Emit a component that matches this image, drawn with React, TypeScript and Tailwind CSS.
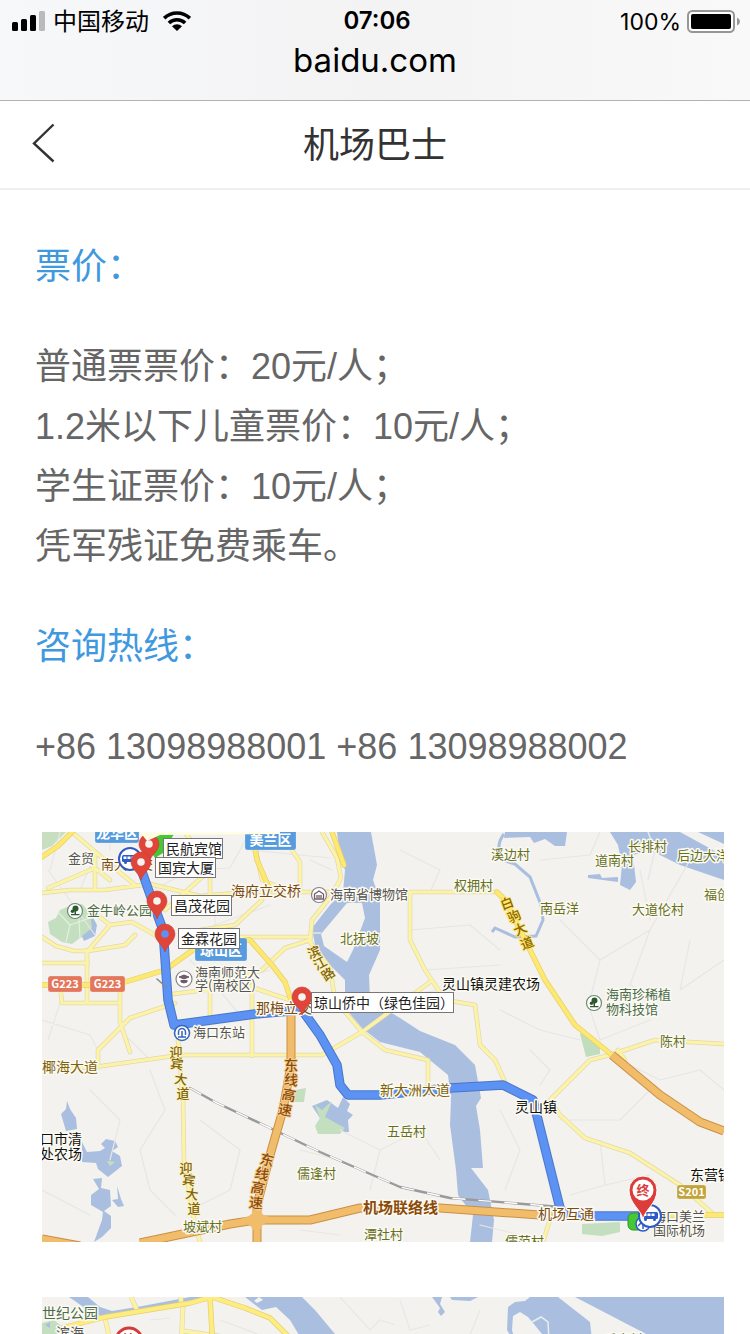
import React from "react";

type Label = { x: number; y: number; t: string; c?: string; s?: number; w?: number; anchor?: "start" | "middle" };

const MAP_FONT = '"Noto Sans CJK SC", sans-serif';
const OLIVE = "#66701f";
const BROWN = "#7a4a14";
const GOLD = "#80620c";
const GREY = "#555555";
const GREEN = "#4c6b4c";

const labels: Label[] = [
  { x: 68, y: 863, t: "金贸", c: GREY },
  { x: 101, y: 869, t: "南大立交", c: BROWN },
  { x: 87, y: 915, t: "金牛岭公园", c: GREEN },
  { x: 231, y: 896, t: "海府立交桥", c: BROWN, s: 14 },
  { x: 330, y: 899, t: "海南省博物馆", c: GREY },
  { x: 340, y: 943, t: "北抚坡", c: OLIVE },
  { x: 454, y: 890, t: "权拥村", c: OLIVE },
  { x: 491, y: 859, t: "溪边村", c: OLIVE },
  { x: 595, y: 865, t: "道南村", c: OLIVE },
  { x: 628, y: 851, t: "长排村", c: OLIVE },
  { x: 677, y: 860, t: "后边大洋", c: OLIVE },
  { x: 704, y: 899, t: "福创", c: OLIVE },
  { x: 540, y: 913, t: "南岳洋", c: OLIVE },
  { x: 632, y: 914, t: "大道伦村", c: OLIVE },
  { x: 195, y: 977, t: "海南师范大", c: GREY },
  { x: 195, y: 990, t: "学(南校区)", c: GREY },
  { x: 193, y: 1037, t: "海口东站", c: GREY },
  { x: 256, y: 1013, t: "那梅立交…", c: BROWN, s: 14 },
  { x: 442, y: 989, t: "灵山镇灵建农场", c: "#111111", s: 14 },
  { x: 606, y: 999, t: "海南珍稀植", c: GREEN },
  { x: 606, y: 1014, t: "物科技馆", c: GREEN },
  { x: 660, y: 1046, t: "陈村", c: OLIVE },
  { x: 42, y: 1072, t: "椰海大道", c: GOLD, s: 14 },
  { x: 380, y: 1095, t: "新大洲大道", c: GOLD, s: 14 },
  { x: 515, y: 1112, t: "灵山镇", c: "#111111", s: 14 },
  { x: 387, y: 1136, t: "五岳村", c: OLIVE },
  { x: 40, y: 1144, t: "口市清", c: "#111111", s: 14 },
  { x: 40, y: 1159, t: "处农场", c: "#111111", s: 14 },
  { x: 297, y: 1178, t: "儒逢村", c: OLIVE },
  { x: 183, y: 1231, t: "坡斌村", c: OLIVE },
  { x: 363, y: 1213, t: "机场联络线", c: "#8b4a08", s: 15, w: 700 },
  { x: 364, y: 1239, t: "潭社村", c: OLIVE },
  { x: 505, y: 1246, t: "儒范村", c: OLIVE },
  { x: 538, y: 1219, t: "机场互通", c: BROWN, s: 14 },
  { x: 690, y: 1180, t: "东营镇", c: "#111111", s: 14 },
  { x: 653, y: 1221, t: "海口美兰", c: GREY },
  { x: 653, y: 1235, t: "国际机场", c: GREY },
];

type Glyph = [string, number, number, number];
const roadNames: { c: string; s: number; halo: string; glyphs: Glyph[] }[] = [
  { c: GOLD, s: 13, halo: "#fbf3c0", glyphs: [["迎", 176, 1052, 0], ["宾", 177, 1064, 8], ["大", 181, 1079, 8], ["道", 183, 1093, 0]] },
  { c: GOLD, s: 13, halo: "#fbf3c0", glyphs: [["迎", 186, 1168, 0], ["宾", 189, 1180, 8], ["大", 192, 1194, 8], ["道", 194, 1208, 0]] },
  { c: "#8b4a08", s: 14, halo: "#f6cf92", glyphs: [["东", 291, 1065, 0], ["线", 291, 1080, 6], ["高", 289, 1095, 12], ["速", 285, 1110, 10]] },
  { c: "#8b4a08", s: 14, halo: "#f6cf92", glyphs: [["东", 267, 1160, 14], ["线", 262, 1174, 14], ["高", 258, 1188, 12], ["速", 256, 1203, 6]] },
  { c: GOLD, s: 13, halo: "#fbf3c0", glyphs: [["滨", 314, 952, -20], ["江", 320, 963, -28], ["路", 328, 974, -35]] },
  { c: "#8d6500", s: 13, halo: "#fde871", glyphs: [["白", 507, 903, -20], ["驹", 514, 916, -25], ["大", 520, 929, -25], ["道", 527, 943, -22]] },
];

function MapText({ x, y, t, c = GREY, s = 13, w = 400, anchor = "start" }: Label) {
  return (
    <text
      x={x}
      y={y}
      fill={c}
      fontSize={s}
      fontWeight={w}
      textAnchor={anchor}
      stroke="#fbfaf2"
      strokeWidth={3}
      strokeLinejoin="round"
      paintOrder="stroke"
    >
      {t}
    </text>
  );
}

function Pin({ x, y, hole = "#f6f2ee" }: { x: number; y: number; hole?: string }) {
  return (
    <g transform={`translate(${x} ${y})`}>
      <path d="M0 17C-2 10-10 6-10-1A10 10 0 1 1 10-1C10 6 2 10 0 17Z" fill="#e0453a" stroke="#c93a30" strokeWidth="0.6" />
      <circle cx="0" cy="-1" r="3.8" fill={hole} />
    </g>
  );
}

function StopTag({ x, y, w, t }: { x: number; y: number; w: number; t: string }) {
  return (
    <g>
      <rect x={x + 0.5} y={y + 0.5} width={w} height={20} fill="#ffffff" stroke="#777777" />
      <text x={x + 3} y={y + 16} fontSize={14} fill="#222222">
        {t}
      </text>
    </g>
  );
}

function Badge({ x, y, w, h, t, fill, s }: { x: number; y: number; w: number; h: number; t: string; fill: string; s: number }) {
  return (
    <g>
      <rect x={x} y={y} width={w} height={h} rx="2.5" fill={fill} stroke="#ffffff" strokeOpacity="0.4" strokeWidth="0.6" />
      <text x={x + w / 2} y={y + h / 2 + s * 0.36} fontSize={s} fontWeight={700} textAnchor="middle" fill="#ffffff">
        {t}
      </text>
    </g>
  );
}

function BusStation({ x, y }: { x: number; y: number }) {
  return (
    <g transform={`translate(${x} ${y})`}>
      <circle r="11" fill="#ffffff" stroke="#2f5bc4" strokeWidth="2" />
      <rect x="-8" y="-4" width="16" height="7" rx="1.5" fill="#2f5bc4" />
      <path d="M-6.500-2.500H-3.500V0H-6.500ZM-2.500-2.500H.5V0H-2.500ZM1.500-2.500H4.500V0H1.500Z" fill="#ffffff" />
      <circle cx="-4.500" cy="3.500" r="1.500" fill="#2f5bc4" />
      <circle cx="4.500" cy="3.500" r="1.500" fill="#2f5bc4" />
    </g>
  );
}

function TreeMark({ x, y }: { x: number; y: number }) {
  return (
    <g transform={`translate(${x} ${y})`}>
      <circle r="7.5" fill="#ffffff" stroke="#6b8a6b" strokeWidth="1.2" />
      <circle cx="0.500" cy="-2.500" r="3" fill="#2d5a2d" />
      <circle cx="-2.500" cy="0.200" r="1.800" fill="#2d5a2d" />
      <path d="M-.5 0H1V3H4.500V4.300H-4V3H-.5Z" fill="#2d5a2d" />
    </g>
  );
}

const minorRoads =
  "M48 870L95 935M60 832L50 870M95 855L80 890M110 832V850M150 892L190 870L230 868L250 832M180 940L215 925V900M215 925L270 905M190 960L215 985L270 970M215 985L240 1015M120 1030L150 1060M42 1020L90 1035L98 1050M60 1003L48 1040M150 1070L165 1110L140 1150L150 1190L175 1215M200 1120L240 1150L230 1190L200 1205M90 1090L120 1120L110 1160M310 860L332 870M250 850L330 858M400 850L440 870L430 892M410 930L470 925L500 950M425 970L500 965M380 1000L440 990M500 1010L540 1030L580 1040M560 920L600 960L590 1000M600 960L650 930L690 860M650 930L630 985L660 1000M640 870L650 920M690 940L680 990L724 960M340 1130L380 1150L420 1130L440 1160M380 1150L370 1190M300 1150L340 1160M500 1110L520 1150L505 1190M560 1120L620 1120L650 1090M600 1140L605 1185L570 1195M605 1185L650 1175M620 1060L660 1080L700 1070L724 1090M300 1230L340 1235M480 1225L520 1235M42 1190L90 1215M590 1010L600 1040L650 1020M540 860L590 855L600 832M530 1050L550 1070L540 1085";

const cityRoads =
  "M72 832L100 856L135 885M95 855V890M42 893L70 890H105L150 884L200 896L250 892H497M48 888L95 868L110 880M42 937L56 946L74 951H88L110 925L132 922L155 935M110 925L97 915M88 951L125 945L135 935M87 950V1003M60 985L62 1003H120M120 990V1022L130 1052M175 1003L130 1018L98 1050V1067M165 995L245 985L290 1000M42 963H88M184 832L210 862V895M210 870L165 910M200 930L235 925L262 900M220 937H310M310 940L285 948L262 970L215 985M252 985V1056M210 975V1015M292 850L300 862V890M322 832L337 858L341 878L332 895L312 920L310 942L330 968L335 1000L362 1032M410 892V940L425 970L445 1000L475 1005L480 1045L495 1060L505 1082M430 982L362 1032L322 1055H180L95 1067L42 1070M362 1032L385 1050L428 1060V1085M178 1040L183 1100L184 1160L195 1225L200 1242M724 1044L655 1040L610 1055L590 1060L550 1100L560 1115L585 1138L630 1153L680 1185L712 1213M553 1210L543 1242M618 1050L625 1060M252 832L262 880L290 892";

const mainRoads = "M42 857L58 846L72 832M42 985H115L165 970L200 945L250 940L272 965L285 982L291 1000M497 892L505 900L530 950L545 980L575 1025L612 1055M600 1215H724M252 832L257 860L270 890M332 832L344 865";

const highways =
  "M291 1010V1065L283 1110L270 1155L257 1205V1242M140 1243L230 1224L256 1220H310L360 1208H440L540 1215H570M42 1239L80 1246M612 1055L660 1095L700 1122L724 1131";

const railway = "M190 1088L215 1102L270 1128L320 1152L400 1187L450 1198L560 1207";

const busRoute =
  "M140 866L152 900L163 930L168 1000L174 1025L255 1014L302 1010L320 1035L337 1065L340 1085L348 1095H380L450 1088L503 1085L533 1100L560 1208L566 1216H650";

function RouteMap() {
  return (
    <svg viewBox="42 832 682 410" className="block h-auto w-full" role="img" aria-label="机场巴士路线图" fontFamily={MAP_FONT}>
      <rect x="42" y="832" width="682" height="410" fill="#f3f2ef" />
      <path d="M42 832H66L52 846L42 850Z" fill="#c7dfc0" />
      <path d="M48 922L56 918L60 910L72 905L82 904L90 912L94 922L92 934L80 938L72 944L62 942L50 934Z" fill="#c4dfc0" />
      <path d="M58 912L70 925L66 942M70 925L90 918M78 905L80 938" fill="none" stroke="#e6eee0" strokeWidth="1.200" />
      <path d="M90 912L97 925L95 936L84 941L82 936L92 928Z" fill="#a9bfe0" />
      <path d="M580 1034L585 1030L600 1046L600 1054L586 1057Z" fill="#c0ddbd" />
      <path d="M582 1224L620 1222V1232L602 1236L582 1234Z" fill="#c3dfbf" />
      <path d="M295 1090L306 1088L304 1102L290 1102Z" fill="#c3dfbf" />
      <g fill="#aabfdf">
        <path d="M337 832H371L377 865L373 880L380 900V950L369 975L370 1000L400 1018L420 1031L430 1035L455 1045L475 1065L481 1098L476 1106L480 1130L483 1168H471L488 1190L494 1220L492 1242H470L473 1215L458 1195L456 1170L450 1125L451 1100L448 1075L420 1052L380 1042L362 1028L345 1008V980L330 965L315 945L312 928L330 905L343 892L345 870L340 855Z" />
        <path d="M610 832L618 845L622 865L620 885L630 890L636 882L633 855L650 850L680 865L724 880V856L680 832Z" />
        <path d="M698 832L724 844V832Z" />
        <path d="M505 832H567L565 846H555L545 839L534 843L530 837L504 838Z" />
        <path d="M588 875L600 874L602 878L618 877V882L588 878Z" />
        <path d="M67 1101L70 1109L76 1118L77 1129L66 1131L61 1114L66 1109Z" />
        <path d="M82 1142L87 1152L100 1151L105 1148L101 1144L106 1139L115 1141L118 1147L112 1151L120 1156L122 1166L108 1177L98 1169L96 1163L82 1162Z" />
        <path d="M93 1179L102 1178L101 1188L110 1190L111 1206L104 1211L111 1216V1228L102 1237L94 1242L102 1220L103 1212L91 1205V1195L99 1189Z" />
        <path d="M117 1186L121 1199L124 1206L118 1207L112 1200L118 1199Z" />
        <path d="M327 1100L338 1108L343 1097L350 1104L347 1111L353 1115L348 1120L349 1132L331 1132L320 1118L312 1106Z" />
      </g>
      <path d="M315 1105L322 1110L332 1101L325 1117L345 1128L340 1134H318L315 1126L320 1118Z" fill="#c3dfbf" />
      <path d="M107 1161L115 1162L110 1166Z" fill="#c3dfbf" />
      <path d="M347 903L321 934L324 946L347 962L353 950L365 918L362 903Z" fill="#f3f2ef" />
      <path d="M504 834Q495 845 502 860L515 864L530 877L541 905L543 920L536 936L515 937L495 928L492 932" fill="none" stroke="#aabfdf" strokeWidth="3" />
      <path d="M313 933H321M648 832L655 850L648 880" fill="none" stroke="#e5e7ea" strokeWidth="1.5" />

      <g fill="none" strokeLinejoin="round" strokeLinecap="round">
        <path d={minorRoads} stroke="#e8e6e3" strokeWidth="1.2" />
        <path d={cityRoads} stroke="#e0d9b0" strokeWidth="4.6" />
        <path d={cityRoads} stroke="#fdf3a6" strokeWidth="3.2" />
        <path d={mainRoads} stroke="#e6cf6a" strokeWidth="5.4" />
        <path d={mainRoads} stroke="#fde871" strokeWidth="4" />
        <path d={railway} stroke="#9a9a9a" strokeWidth="2.4" />
        <path d={railway} stroke="#ffffff" strokeWidth="1.4" strokeLinecap="butt" strokeDasharray="13 13" />
        <path d={highways} stroke="#c98f45" strokeWidth="9" strokeLinecap="butt" />
        <path d={highways} stroke="#f2bd6b" strokeWidth="7" strokeLinecap="butt" />
        <path d="M243 1220Q256 1218 257 1206Q258 1218 270 1219Q258 1222 257 1234Q255 1223 243 1220Z" fill="#f2bd6b" stroke="#f2bd6b" strokeWidth="4" />
        <path d={busRoute} stroke="#4a76c8" strokeWidth="9.500" />
        <path d={busRoute} stroke="#5b92f3" strokeWidth="7.500" />
        <path d="M157 979L166 987" stroke="#888888" strokeWidth="1.500" />
      </g>

      <Badge x={95} y={823} w={44} h={20} t="龙华区" fill="#559bdd" s={14} />
      <Badge x={245} y={830} w={51} h={20} t="美兰区" fill="#559bdd" s={14} />
      <Badge x={195} y={938} w={52} h={23} t="琼山区" fill="#559bdd" s={14} />
      <Badge x={48} y={976} w={34} h={16} t="G223" fill="#e4765c" s={11} />
      <Badge x={90} y={976} w={35} h={16} t="G223" fill="#e4765c" s={11} />
      <Badge x={677} y={1185} w={29} h={14} t="S201" fill="#c2a43c" s={11} />

      {labels.map((l) => (
        <MapText key={`${l.t}-${l.x}-${l.y}`} {...l} />
      ))}
      {roadNames.map((road, i) => (
        <g key={i} fill={road.c} fontSize={road.s} fontWeight={500} textAnchor="middle" stroke={road.halo} strokeWidth="2" strokeLinejoin="round" paintOrder="stroke">
          {road.glyphs.map(([ch, x, y, r]) => (
            <text key={`${ch}${y}`} transform={`translate(${x} ${y}) rotate(${r})`} y="5">
              {ch}
            </text>
          ))}
        </g>
      ))}

      <TreeMark x={75} y={911} />
      <TreeMark x={594} y={1003} />
      <circle cx="319" cy="895" r="7.500" fill="#ffffff" stroke="#8a8088" strokeWidth="1.200" />
      <path d="M314.500 894L319 891L323.500 894V899H314.500ZM317 895V898M319 895V898M321 895V898" fill="#fff" stroke="#6d5d68" strokeWidth="1.300" />
      <circle cx="184" cy="979" r="8" fill="#ffffff" stroke="#8a8088" strokeWidth="1.200" />
      <path d="M179 977L184 975L189 977L184 979ZM181 980V982Q184 984 187 982V980" fill="#6d5d68" stroke="#6d5d68" strokeWidth="1" />
      <circle cx="182" cy="1033" r="7.500" fill="#ffffff" stroke="#3766bd" strokeWidth="1.600" />
      <path d="M178.500 1035V1032A3.500 3.500 0 0 1 185.500 1032V1035M178 1037H186M182 1031V1037" fill="none" stroke="#3766bd" strokeWidth="1.500" />

      <BusStation x={130} y={859} />
      <path d="M148 847L160 832H175L174 834L163 853L155 858Z" fill="#45c832" />
      <Pin x={149} y={845} />
      <path d="M140 832H280V834L160 835L147 841Z" fill="#fffde6" />
      <Pin x={141} y={863} />
      <Pin x={157} y={902} />
      <Pin x={165} y={935} hole="#5b92f3" />
      <Pin x={302} y={998} />
      <StopTag x={163} y={838} w={59} t="民航宾馆" />
      <StopTag x={155} y={857} w={60} t="国宾大厦" />
      <StopTag x={171} y={895} w={60} t="昌茂花园" />
      <StopTag x={178} y={928} w={61} t="金霖花园" />
      <StopTag x={311} y={992} w={142} t="琼山侨中（绿色佳园）" />

      <rect x="628" y="1213" width="18" height="17" rx="5" fill="#45c832" stroke="#31952a" />
      <circle cx="643" cy="1224" r="7" fill="#ffffff" stroke="#2f5bc4" strokeWidth="1.500" />
      <path d="M638 1226L643 1221L648 1226M643 1220V1229" stroke="#2f5bc4" strokeWidth="1.500" fill="none" />
      <BusStation x={650} y={1216} />
      <path d="M643 1220C642 1210 629 1204 629 1190A14 14 0 1 1 657 1190C657 1204 644 1210 643 1220Z" fill="#dc3d3b" stroke="#ffffff" strokeWidth="1" />
      <circle cx="643" cy="1190" r="10.500" fill="#ffffff" />
      <text x="643" y="1195" textAnchor="middle" fontSize="13" fontWeight="700" fill="#dc3d3b">
        终
      </text>
    </svg>
  );
}

function CoastMap() {
  const roads = "M131 1297L137 1310M181 1297V1303M105 1318L112 1350M183 1305L181 1350M183 1331L225 1337L280 1340";
  const avenues = "M62 1328L105 1317L190 1303L212 1297L245 1308L270 1318L292 1340M210 1297L213 1350";
  return (
    <svg viewBox="42 1297 682 410" className="block h-auto w-full" role="img" aria-label="滨海路线图" fontFamily={MAP_FONT}>
      <rect x="42" y="1297" width="682" height="410" fill="#f3f2ef" />
      <g fill="#aabfdf">
        <path d="M69 1297H88L100 1307L112 1311L137 1307L190 1297H203L190 1304L137 1313L107 1318L92 1313Z" />
        <path d="M245 1297H302L315 1310L340 1340H302L290 1320L276 1307L262 1310Z" />
        <path d="M432 1297H442L440 1304L445 1312L441 1316L438 1312L440 1308ZM450 1297H478L470 1301L452 1300Z" />
        <path d="M530 1297H558L590 1322L592 1340H547L528 1317L520 1312L513 1316L512 1330L516 1345L507 1330L508 1307L515 1302L525 1301Z" />
        <path d="M575 1297H724V1707H700L650 1336Z" />
      </g>
      <path d="M254 1301L259 1297L263 1300L257 1303Z" fill="#f3f2ef" />
      <path d="M532 1322L541 1317L548 1322L549 1340" fill="none" stroke="#e8edf2" strokeWidth="1.500" />
      <path d="M42 1323L54 1320L64 1328L60 1345H42Z" fill="#c4dfc0" />
      <path d="M45 1325L50 1322V1328Z" fill="#aabfdf" />
      <path d="M340 1297L370 1330L380 1320L395 1325M400 1300L410 1330L430 1325M480 1310L470 1335M150 1320L170 1318M220 1320L260 1335" fill="none" stroke="#e9e7e4" strokeWidth="1.200" />
      <g fill="none" strokeLinejoin="round">
        <path d={roads} stroke="#e0d9b0" strokeWidth="5" />
        <path d={roads} stroke="#fdf3a6" strokeWidth="3.600" />
        <path d={avenues} stroke="#e6cf6a" strokeWidth="5.400" />
        <path d={avenues} stroke="#fdec82" strokeWidth="4" />
      </g>
      <MapText x={42} y={1318} t="世纪公园" c={GREEN} s={14} />
      <MapText x={56} y={1338} t="滨海" c={GREY} s={14} />
      <MapText x={604} y={1344} t="千家村" c={OLIVE} />
      <circle cx="129" cy="1341" r="13" fill="#ffffff" stroke="#d33b3b" strokeWidth="3" />
      <text x="129" y="1344" textAnchor="middle" fontSize="13" fontWeight="700" fill="#dc3d3b">
        始
      </text>
    </svg>
  );
}

function StatusBar() {
  return (
    <div className="grid h-10 grid-cols-3 items-center px-3 text-2xl leading-10">
      <div className="flex items-center">
        <svg viewBox="0 0 33 20" className="h-5 w-[33px]" aria-hidden="true">
          <rect x="0" y="11" width="6" height="9" rx="1.500" />
          <rect x="9" y="8" width="6" height="12" rx="1.500" />
          <rect x="18" y="4" width="6" height="16" rx="1.500" />
          <rect x="27" y="0" width="6" height="20" rx="1.500" fill="#b9babb" />
        </svg>
        <span className="ml-2 whitespace-nowrap pt-0.5">中国移动</span>
        <svg viewBox="0 0 28 20" className="ml-3.5 h-5 w-7" aria-hidden="true">
          <g fill="none" stroke="#000000" strokeWidth="3.600">
            <path d="M1.200 7.200A18.500 18.500 0 0 1 26.800 7.200" />
            <path d="M5.900 12A11.800 11.800 0 0 1 22.100 12" />
          </g>
          <path d="M14 20L9 15.200A7.200 7.200 0 0 1 19 15.200Z" />
        </svg>
      </div>
      <div className="pl-1 text-center font-semibold">07:06</div>
      <div className="flex items-center justify-end">
        <span className="pt-px text-[23px]">100%</span>
        <svg viewBox="0 0 53 23" className="ml-1.5 -mr-0.5 h-[23px] w-[53px]" aria-hidden="true">
          <rect x="1" y="1" width="46" height="21" rx="4.500" fill="#ffffff" stroke="#969696" strokeWidth="2" />
          <rect x="4" y="4" width="40" height="15" rx="2" />
          <path d="M50 7.500Q53 9 53 11.500Q53 14 50 15.500Z" fill="#969696" />
        </svg>
      </div>
    </div>
  );
}

export default function App() {
  return (
    <div className="h-screen overflow-hidden bg-white font-['Liberation_Sans','Noto_Sans_CJK_SC',sans-serif]">
      <div className="border-b border-[#b2b2b2] bg-linear-to-r from-[#f7f8fa] via-[#f3f3f4] to-[#f9f9f9] pb-5 font-['Inter','Noto_Sans_CJK_SC',sans-serif] text-black">
        <StatusBar />
        <div className="text-center text-[33px] leading-10">baidu.com</div>
      </div>

      <header className="grid h-[89px] grid-cols-[90px_1fr_90px] items-center border-b-2 border-[#f0f0f0]">
        <button type="button" aria-label="返回" className="flex h-full items-center pb-1 pl-8">
          <svg viewBox="0 0 24 40" className="h-10 w-6" fill="none" stroke="#333333" strokeWidth="2.400" aria-hidden="true">
            <path d="M21.500 1.500L2 20.500L21.500 38.500" />
          </svg>
        </button>
        <h1 className="pt-0.5 text-center text-[36px] text-[#333333]">机场巴士</h1>
      </header>

      <main className="px-[35px] pt-[47px] text-[36px] leading-[60px] text-[#666666]">
        <h2 className="mb-10 text-[#4099de]">票价：</h2>
        <p>普通票票价：20元/人；</p>
        <p>1.2米以下儿童票价：10元/人；</p>
        <p>学生证票价：10元/人；</p>
        <p>凭军残证免费乘车。</p>
        <h2 className="my-10 text-[#4099de]">咨询热线：</h2>
        <p>+86 13098988001 +86 13098988002</p>
        <div className="-mr-[9px] ml-[7px] mt-[55px] flex flex-col gap-[55px]">
          <RouteMap />
          <CoastMap />
        </div>
      </main>
    </div>
  );
}
